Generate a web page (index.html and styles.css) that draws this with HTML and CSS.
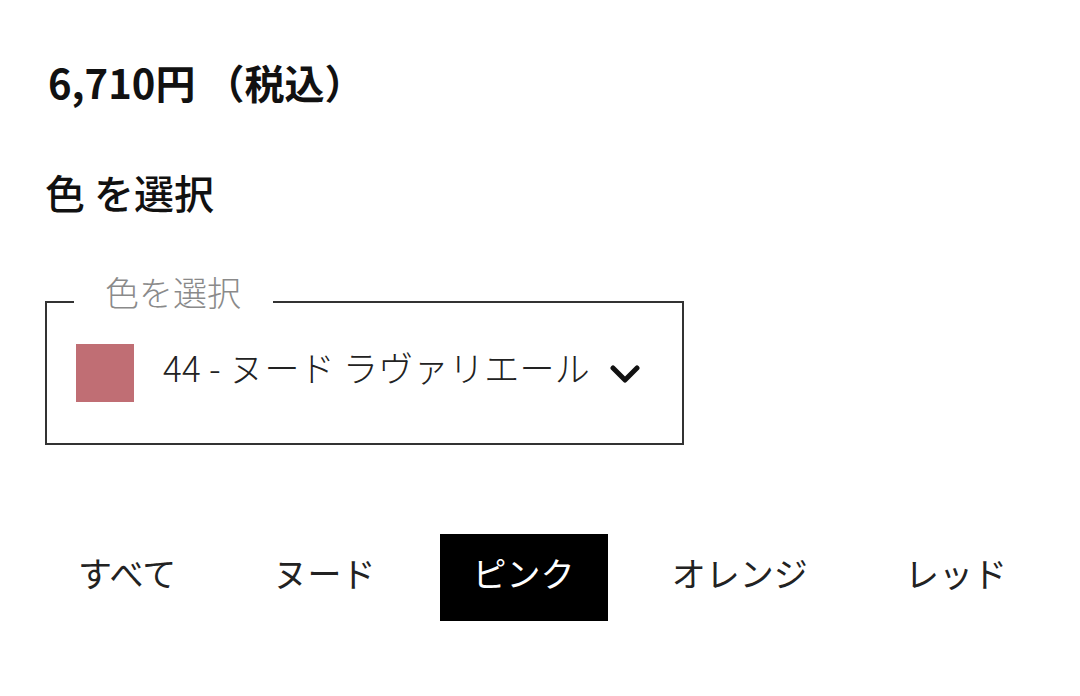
FILE: index.html
```html
<!DOCTYPE html>
<html lang="ja">
<head>
<meta charset="utf-8">
<link rel="stylesheet" href="styles.css">
</head>
<body>
<div class="page">
  <div class="price">6,710円 （税込）</div>
  <h2 class="heading">色 を選択</h2>
  <fieldset class="select">
    <legend class="legend">色を選択</legend>
    <div class="option">
      <span class="swatch"></span>
      <span class="name">44 - ヌード ラヴァリエール</span>
      <svg class="chevron" width="30" height="18" viewBox="0 0 30 18"><polyline points="3,3 15,15 27,3" fill="none" stroke="#111" stroke-width="5" stroke-linecap="round" stroke-linejoin="round"/></svg>
    </div>
  </fieldset>
  <div class="tabs">
    <span class="tab">すべて</span>
    <span class="tab">ヌード</span>
    <span class="tab active">ピンク</span>
    <span class="tab">オレンジ</span>
    <span class="tab">レッド</span>
  </div>
</div>
</body>
</html>
```
FILE: styles.css
```css
html, body {
  margin: 0;
  padding: 0;
  background: #fff;
}
body {
  font-family: "Noto Sans CJK JP", "Noto Sans", sans-serif;
  color: #111;
}
.page {
  padding: 58px 40px 0 45px;
}
.price {
  font-size: 40px;
  line-height: 48px;
  font-weight: 700;
  padding-left: 3px;
}
.heading {
  margin: 62px 0 0 0;
  font-size: 40px;
  line-height: 48px;
  font-weight: 500;
}
.select {
  margin: 59px 0 0 0;
  width: 639px;
  box-sizing: border-box;
  border: 2px solid #333;
  padding: 14px 0 40px 29px;
}
.legend {
  margin-left: -2px;
  padding: 0 32px 20px 31px;
  font-size: 34px;
  line-height: 34px;
  font-weight: 300;
  color: #8a8a8a;
}
.option {
  display: flex;
  align-items: center;
  height: 60px;
}
.swatch {
  width: 58px;
  height: 58px;
  background: #c06e74;
  flex: none;
}
.name {
  margin-left: 29px;
  font-size: 35px;
  line-height: 40px;
  font-weight: 300;
  letter-spacing: 0.3px;
  color: #222;
  margin-top: -12px;
}
.chevron {
  margin-left: 20px;
  margin-top: 2px;
}
.tabs {
  margin-top: 89px;
  width: 995px;
  display: flex;
  justify-content: space-between;
}
.tab {
  height: 87px;
  line-height: 77px;
  padding: 0 33px;
  font-size: 34px;
  font-weight: 400;
  color: #222;
}
.tab.active {
  background: #000;
  color: #fff;
}
```
